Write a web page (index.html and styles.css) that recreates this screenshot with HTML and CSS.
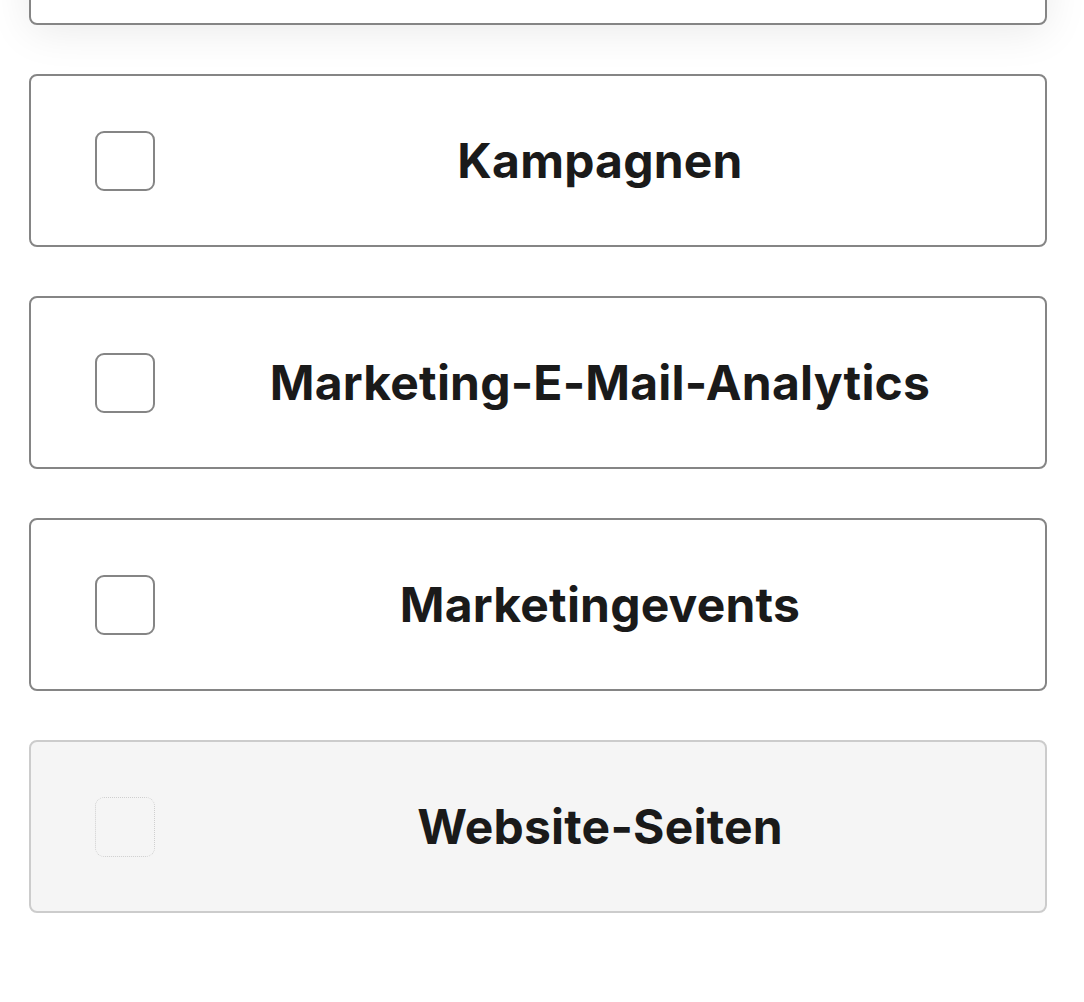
FILE: index.html
```html
<!DOCTYPE html>
<html lang="de">
<head>
<meta charset="utf-8">
<title>Objekte</title>
<link rel="stylesheet" href="styles.css">
</head>
<body>
<div class="list">
  <div class="card card--raised"></div>
  <label class="card">
    <span class="box"></span>
    <span class="label">Kampagnen</span>
  </label>
  <label class="card">
    <span class="box"></span>
    <span class="label">Marketing-E-Mail-Analytics</span>
  </label>
  <label class="card">
    <span class="box"></span>
    <span class="label">Marketingevents</span>
  </label>
  <label class="card card--disabled">
    <span class="box"></span>
    <span class="label">Website-Seiten</span>
  </label>
</div>
</body>
</html>
```
FILE: styles.css
```css
html, body {
  margin: 0;
  padding: 0;
  background: #ffffff;
}
body {
  font-family: Inter, "Noto Sans", sans-serif;
  color: #1a1a1a;
  overflow: hidden;
}
.list {
  display: flex;
  flex-direction: column;
  gap: 49px;
  padding: 0 37px 0 29px;
  margin-top: -148px;
}
.card {
  box-sizing: border-box;
  height: 173px;
  display: flex;
  align-items: center;
  padding-left: 64px;
  border: 2px solid #858585;
  border-radius: 8px;
  background: #ffffff;
}
.card--raised {
  box-shadow: 0 6px 44px rgba(0, 0, 0, 0.085);
}
.box {
  box-sizing: border-box;
  flex: 0 0 auto;
  width: 60px;
  height: 60px;
  border: 2px solid #858585;
  border-radius: 9px;
  background: #ffffff;
}
.label {
  flex: 1;
  text-align: center;
  font-size: 48px;
  font-weight: 700;
  letter-spacing: 0.2px;
}
.card--disabled {
  background: #f5f5f5;
  border-color: #cccccc;
}
.card--disabled .box {
  background: transparent;
  border: 1px dotted #cfcfcf;
}
```
